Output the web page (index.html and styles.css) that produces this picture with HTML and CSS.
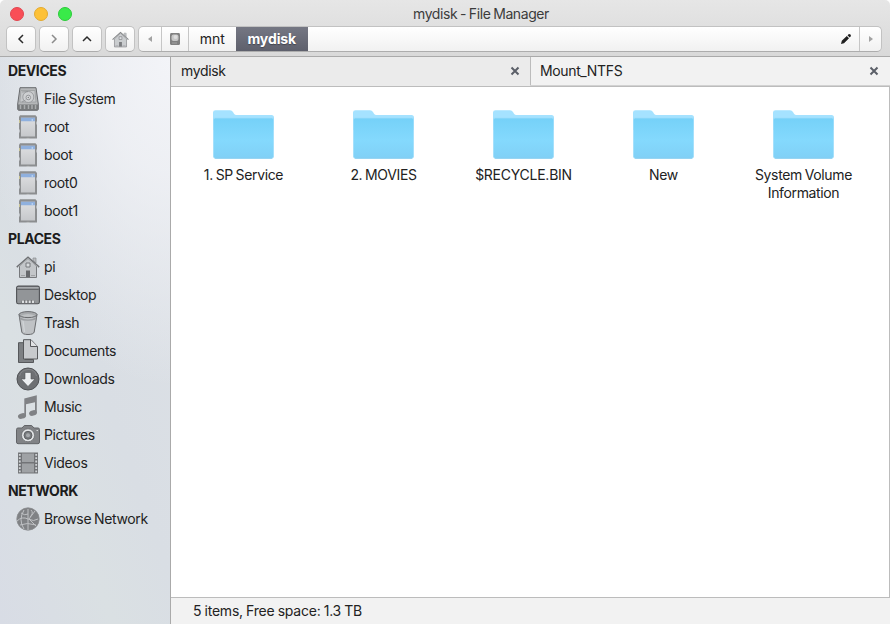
FILE: index.html
```html
<!DOCTYPE html>
<html lang="en">
<head>
<meta charset="utf-8">
<title>mydisk - File Manager</title>
<link rel="stylesheet" href="styles.css">
</head>
<body>
<svg class="defs" aria-hidden="true">
  <defs>
    <linearGradient id="gb" x1="0" y1="0" x2="0" y2="1"><stop offset="0" stop-color="#75d1f8"/><stop offset=".55" stop-color="#84d9fd"/><stop offset="1" stop-color="#80d0f6"/></linearGradient>
    <linearGradient id="gc" x1="0" y1="0" x2="0" y2="1"><stop offset="0" stop-color="#dedfe1"/><stop offset="1" stop-color="#c6c8cb"/></linearGradient>
  </defs>
  <symbol id="folder" viewBox="0 0 61 49">
    <path d="M0 2.500Q0 .3 2.500 .3H17Q19 .3 20 2L21 3.800Q21.800 5 23.500 5H58.500Q61 5 61 7.500V20H0Z" fill="#a5e2ff"/>
    <path d="M.4 10Q.4 8 2.400 8H58.600Q60.600 8 60.600 10V46Q60.600 48.500 58 48.500H3Q.4 48.500.4 46Z" fill="url(#gb)" stroke="#9eddfa" stroke-width=".8"/>
    <path d="M2 48.200H59" stroke="#8accee" stroke-width=".8"/>
  </symbol>
  <symbol id="drive" viewBox="0 0 24 24">
    <path d="M4 .7H20L22.300 17V22Q22.300 23.300 21 23.300H3Q1.700 23.300 1.700 22V17Z" fill="#b5b7b9" stroke="#686a6d"/>
    <path d="M2 17.500H22V23H2Z" fill="#77797b"/>
    <path d="M4.500 18V22M8.500 18V22M12.500 18V22M16 18V22M19.500 18V22" stroke="#aaacae" stroke-width="1.500"/>
    <path d="M5 3.500L3.800 15H20L18.900 3.500Z" fill="#c5c7c9" stroke="#97999b" stroke-width=".7"/>
    <circle cx="12.300" cy="10" r="5.500" fill="#ced0d2" stroke="#909295" stroke-width=".8"/>
    <circle cx="12.300" cy="10.500" r="2.300" fill="#d6d8da" stroke="#85878a" stroke-width=".8"/><circle cx="12.300" cy="10.500" r=".7" fill="#77797b"/>
    <path d="M6 5L12 4.500M6 15L9.500 13" stroke="#8d8f92" stroke-width=".8"/>
  </symbol>
  <symbol id="card" viewBox="0 0 24 24">
    <path d="M4 .3H19.500L21 2V6L20.500 7V9L21 10V23.500H3V18L3.600 17V15L3 14V2Z" fill="#8c8e90"/>
    <path d="M5 2.700H19V21.500H5Z" fill="url(#gc)"/>
    <path d="M5 2.700H19V6.300H5Z" fill="#8fb0de"/><path d="M16.200 4V6" stroke="#c6dcf8"/>
    <path d="M3.500 5V8" stroke="#c9c393"/><path d="M10.500 23.400H13.500" stroke="#c1c3c5"/>
  </symbol>
  <symbol id="home" viewBox="0 0 24 24">
    <path d="M17 5V3H20V8Z" fill="#b9bcbf" stroke="#8a8c8f" stroke-width=".7"/>
    <path d="M3.500 11L12 3.500 20.500 11V22.500H3.500Z" fill="#c3c6c9" stroke="#77797c"/>
    <path d="M.8 12.200L12 2.200 23.200 12.200" fill="none" stroke="#6e7073" stroke-width="1.600"/>
    <path d="M2 12.200L12 3.500 22 12.200" fill="none" stroke="#d0d3d5" stroke-width=".6"/>
    <path d="M10 8H14V12H10Z" fill="#d9dcde" stroke="#77797c"/>
    <path d="M10 15.500H14V22H10Z" fill="#66686b"/><path d="M5 20.500H9M15 20.500H19" stroke="#a0a2a5"/>
  </symbol>
  <symbol id="desktop" viewBox="0 0 24 24">
    <rect x=".6" y="3.100" width="22.800" height="17.600" rx="1.800" fill="#929598" stroke="#505255" stroke-width="1.100"/>
    <path d="M1.500 4.500H22.500" stroke="#a8abae"/><path d="M1.200 6.500H22.800" stroke="#65676a"/>
    <path d="M5 20.300L6 17H18L19 20.300Z" fill="#76787b"/>
    <path d="M7 17.500V20M10.300 17.500V20M13.700 17.500V20M17 17.500V20" stroke="#e1e3e5" stroke-width="1.900"/>
  </symbol>
  <symbol id="trash" viewBox="0 0 24 24">
    <path d="M3 3.500L5.800 21Q6.500 23.500 12 23.500T18.200 21L21 3.500Z" fill="#bfc2c5" stroke="#696b6e"/>
    <path d="M3.500 6Q12 11 20.500 6L20 8.500Q12 11 4 8.500Z" fill="#9b9ea1"/>
    <ellipse cx="12" cy="3.600" rx="9" ry="3" fill="#a7aaad" stroke="#696b6e"/>
    <path d="M5 4.500Q12 1.500 19 4.500Q12 7.500 5 4.500" fill="#bfc2c4"/><path d="M7 10L8.500 21" stroke="#d0d3d6" stroke-width="1.400"/>
  </symbol>
  <symbol id="documents" viewBox="0 0 24 24">
    <path d="M2.500 3.700H9V20.500H17.500V23.500H2.500Z" fill="#7d8083" stroke="#56585b"/>
    <path d="M7.500.7H15L21.500 7.500V20H7.500Z" fill="#c7cacd" stroke="#56585b"/>
    <path d="M14.500.7V7.500H21.500" fill="#e1e3e5" stroke="#56585b"/>
  </symbol>
  <symbol id="downloads" viewBox="0 0 24 24">
    <circle cx="12" cy="12" r="11" fill="#6e7073" stroke="#505255"/><path d="M3.500 9Q5 3 12 2.500T20.500 9" fill="none" stroke="#85878a"/>
    <path d="M9 5.500H15V12H19L12 19.500 5 12H9Z" fill="#eceef0" stroke="#535558" stroke-width=".6"/>
  </symbol>
  <symbol id="music" viewBox="0 0 24 24">
    <path d="M8.300 3.500L20.800.3V18H19V7.200L10 9.200V21H8.300Z" fill="#808285"/>
    <ellipse cx="6" cy="21" rx="4.100" ry="2.700" fill="#808285" transform="rotate(-14 6 21)"/><ellipse cx="17" cy="18" rx="4" ry="2.700" fill="#808285" transform="rotate(-14 17 18)"/>
  </symbol>
  <symbol id="pictures" viewBox="0 0 24 24">
    <path d="M2 5H6L8.300 2.500H15.700L18 5H22Q23.500 5 23.500 6.500V19Q23.500 20.700 22 20.700H2Q.5 20.700.5 19V6.500Q.5 5 2 5Z" fill="#818386" stroke="#626467"/>
    <circle cx="12" cy="12.300" r="6.500" fill="#e3e5e7" stroke="#5f6164" stroke-width=".7"/><circle cx="12" cy="12.300" r="4" fill="#777a7d" stroke="#5f6164"/><circle cx="12" cy="12.300" r="2" fill="#a6a9ac"/>
    <path d="M20.500 7.500H22" stroke="#d5d7d9"/>
  </symbol>
  <symbol id="videos" viewBox="0 0 24 24">
    <path d="M2 1.500H22V22.500H2Z" fill="#727477"/><path d="M6 2.500H18V11H6ZM6 12.500H18V21.500H6Z" fill="#9fa2a5"/>
    <path d="M3.800 3V22M20.200 3V22" stroke="#d2d5d8" stroke-width="1.800" stroke-dasharray="1.800 1.500"/>
  </symbol>
  <symbol id="network" viewBox="0 0 24 24">
    <circle cx="12" cy="12" r="11.200" fill="#808285" stroke="#8c8e91" stroke-width=".8"/>
    <g fill="none" stroke="#bfc1c4" stroke-width="1"><path d="M12 2V23M1 14Q6 9 12 12T22 12M5 6Q9 9 12 7M4 18Q11 15 20 18M8 3Q2 13 8 22M13 12L19 4M13 12L20 19M15 3Q18 6 14 10"/></g>
  </symbol>
  <symbol id="close" viewBox="0 0 10 10"><path d="M1.500 1.500L8.500 8.500M8.500 1.500L1.500 8.500" stroke="#5b5f68" stroke-width="2"/></symbol>
</svg>

<div class="window">
  <header class="header">
    <div class="titlebar">
      <div class="lights"><i class="light red"></i><i class="light yellow"></i><i class="light green"></i></div>
      <h1 class="title">mydisk - File Manager</h1>
    </div>
    <nav class="toolbar">
      <button class="tool" aria-label="Back"><svg width="10" height="10" viewBox="0 0 10 10"><path d="M7 1L3 5L7 9" class="arrow"/></svg></button>
      <button class="tool" aria-label="Forward"><svg width="10" height="10" viewBox="0 0 10 10"><path d="M3 1L7 5L3 9" class="arrow dim"/></svg></button>
      <button class="tool" aria-label="Up"><svg width="10" height="10" viewBox="0 0 10 10"><path d="M1 7L5 3L9 7" class="arrow"/></svg></button>
      <button class="tool" aria-label="Home"><svg class="tool-home" width="17" height="17"><use href="#home"/></svg></button>
      <div class="pathbar">
        <div class="seg seg-prev"><svg width="6" height="8"><path d="M5 1V7L1 4Z" fill="#a2a2a2"/></svg></div>
        <div class="seg seg-disk"><svg width="12" height="14" viewBox="0 0 12 14"><path d="M2 1H10Q11 1 11 3V11.500Q11 13 9.500 13H2.500Q1 13 1 11.500V3Q1 1 2 1Z" fill="#808080"/><rect x="2.500" y="2.500" width="7" height="6.500" rx="2" fill="#c6c6c6"/><circle cx="6.500" cy="5" r="2" fill="#ddd"/><path d="M3 11H8" stroke="#a3a3a3"/></svg></div>
        <div class="seg seg-mnt">mnt</div>
        <div class="seg seg-current">mydisk</div>
        <div class="seg seg-fill"><svg width="12" height="12" viewBox="0 0 12 12"><path d="M1 11L1.800 7.800L6.800 3L9 5.200L4 10.200ZM7.500 2.200L9 1Q11 1 11 3L9.700 4.500Z" fill="#202020"/></svg></div>
        <div class="seg seg-next"><svg width="6" height="8"><path d="M1 1V7L5 4Z" fill="#a2a2a2"/></svg></div>
      </div>
    </nav>
  </header>
  <div class="body">
    <aside class="sidebar">
      <h2>DEVICES</h2>
      <ul>
        <li><svg><use href="#drive"/></svg>File System</li>
        <li><svg><use href="#card"/></svg>root</li>
        <li><svg><use href="#card"/></svg>boot</li>
        <li><svg><use href="#card"/></svg>root0</li>
        <li><svg><use href="#card"/></svg>boot1</li>
      </ul>
      <h2>PLACES</h2>
      <ul>
        <li><svg><use href="#home"/></svg>pi</li>
        <li><svg><use href="#desktop"/></svg>Desktop</li>
        <li><svg><use href="#trash"/></svg>Trash</li>
        <li><svg><use href="#documents"/></svg>Documents</li>
        <li><svg><use href="#downloads"/></svg>Downloads</li>
        <li><svg><use href="#music"/></svg>Music</li>
        <li><svg><use href="#pictures"/></svg>Pictures</li>
        <li><svg><use href="#videos"/></svg>Videos</li>
      </ul>
      <h2>NETWORK</h2>
      <ul><li><svg><use href="#network"/></svg>Browse Network</li></ul>
    </aside>
    <main class="main">
      <div class="tabs">
        <div class="tab tab-active"><span>mydisk</span><svg><use href="#close"/></svg></div>
        <div class="tab"><span>Mount_NTFS</span><svg><use href="#close"/></svg></div>
      </div>
      <div class="files">
        <div class="file"><svg><use href="#folder"/></svg><span>1. SP Service</span></div>
        <div class="file"><svg><use href="#folder"/></svg><span>2. MOVIES</span></div>
        <div class="file file-caps"><svg><use href="#folder"/></svg><span>$RECYCLE.BIN</span></div>
        <div class="file"><svg><use href="#folder"/></svg><span>New</span></div>
        <div class="file"><svg><use href="#folder"/></svg><span>System Volume Information</span></div>
      </div>
      <footer class="status">5 items, Free space: 1.3 TB</footer>
    </main>
  </div>
</div>
</body>
</html>
```
FILE: styles.css
```css
* { box-sizing: border-box; }
body {
  margin: 0;
  background: #fff;
  color: #222;
  font: 14px/18px Inter, "Liberation Sans", sans-serif;
  letter-spacing: -0.36px;
  word-spacing: -0.8px;
}
svg { display: block; flex: none; }
.defs { position: absolute; width: 0; height: 0; }
.window {
  width: 890px;
  height: 624px;
  display: flex;
  flex-direction: column;
  overflow: hidden;
  border-radius: 5px 5px 0 0;
}
.header {
  height: 57px;
  border-bottom: 1px solid #aaa;
  background: linear-gradient(#e6e6e6, #d9d9d9);
}
.titlebar {
  height: 26px;
  display: grid;
  grid-template-columns: 72px 1fr;
  align-items: center;
  padding: 2px 0 0 10px;
}
.lights { display: flex; gap: 10px; }
.light { width: 14px; height: 14px; border-radius: 50%; border: 1px solid; }
.red { background: #f94e57; border-color: #e24650; }
.yellow { background: #fdc137; border-color: #e3aa2f; }
.green { background: #39ea49; border-color: #2ccb3b; }
.title {
  margin: 0 82px 0 0;
  padding-left: 72px;
  text-align: center;
  font-size: 14px;
  font-weight: 400;
  color: #3c3c3c;
  letter-spacing: -0.4px;
}
.toolbar { display: flex; gap: 3px; padding: 0 8px 0 6px; }
.tool {
  width: 30px;
  height: 26px;
  padding: 0;
  display: flex;
  align-items: center;
  justify-content: center;
  border: 1px solid #c2c2c2;
  border-bottom-color: #adadad;
  border-radius: 5px;
  background: linear-gradient(#fff, #f1f1f1);
}
.tool-home { opacity: .85; }
.arrow { fill: none; stroke: #2b2b2b; stroke-width: 1.5; }
.dim { stroke: #8b8b8b; }
.pathbar {
  flex: 1;
  height: 26px;
  display: flex;
  overflow: hidden;
  border: 1px solid #c2c2c2;
  border-bottom-color: #adadad;
  border-radius: 5px;
  background: linear-gradient(#fff, #f1f1f1);
  letter-spacing: -0.1px;
}
.seg { display: flex; align-items: center; justify-content: center; border-right: 1px solid #c6c6c6; }
.seg-prev { width: 23px; }
.seg-disk { width: 27px; }
.seg-mnt { width: 46.5px; border-right: 0; }
.seg-current {
  width: 72.5px;
  border: 0;
  background: linear-gradient(#757783, #5e606c);
  color: #fff;
  font-weight: 700;
  text-shadow: 0 1px 1px #444650;
}
.seg-fill { flex: 1; justify-content: flex-end; padding-right: 7px; }
.seg-next { width: 21px; border: 0; }
.body { flex: 1; display: flex; min-height: 0; }
.sidebar {
  width: 171px;
  border-right: 1px solid #aaa;
  background:
    radial-gradient(ellipse 190px 330px at 100% 0, #f3f4f8 0%, rgba(243, 244, 248, .75) 35%, rgba(243, 244, 248, 0) 100%),
    linear-gradient(250deg, #dde1e6, #d9dee4 50%, #dae0e3 70%, #d8dce5);
}
.sidebar h2 {
  margin: 0;
  padding-left: 8px;
  font-size: 14px;
  line-height: 28px;
  font-weight: 700;
  letter-spacing: -0.4px;
  color: #1c1c1c;
}
.sidebar ul { margin: 0; padding: 0; list-style: none; }
.sidebar li { height: 28px; display: flex; align-items: center; gap: 4px; padding-left: 16px; }
.sidebar li svg { width: 24px; height: 24px; }
.main { flex: 1; min-width: 0; display: flex; flex-direction: column; }
.tabs { height: 30px; display: flex; border-bottom: 1px solid #bcbcbc; background: #f2f2f2; }
.tab {
  flex: 1;
  display: flex;
  align-items: center;
  justify-content: space-between;
  padding: 0 11px 1px 9px;
  border-bottom: 1px solid #d2d2d2;
}
.tab svg { width: 10px; height: 10px; }
.tab-active { flex: 0 0 360px; background: #ebebeb; border-right: 1px solid #bcbcbc; border-bottom-color: #ebebeb; padding-left: 10px; padding-right: 10px; }
.files {
  flex: 1;
  display: grid;
  grid-template-columns: repeat(5, 140px);
  align-content: start;
  padding: 23px 0 0 2px;
  border-right: 1px solid #bcbcbc;
}
.file { display: flex; flex-direction: column; align-items: center; gap: 7px; text-align: center; }
.file svg { width: 61px; height: 49px; margin-left: 1px; }
.file span { width: 110px; margin-left: 1px; }
.file-caps { letter-spacing: -0.25px; }
.status { height: 27px; border-top: 1px solid #bcbcbc; background: #f2f2f2; padding: 4px 22px; letter-spacing: -0.22px; word-spacing: -0.5px; }
```
